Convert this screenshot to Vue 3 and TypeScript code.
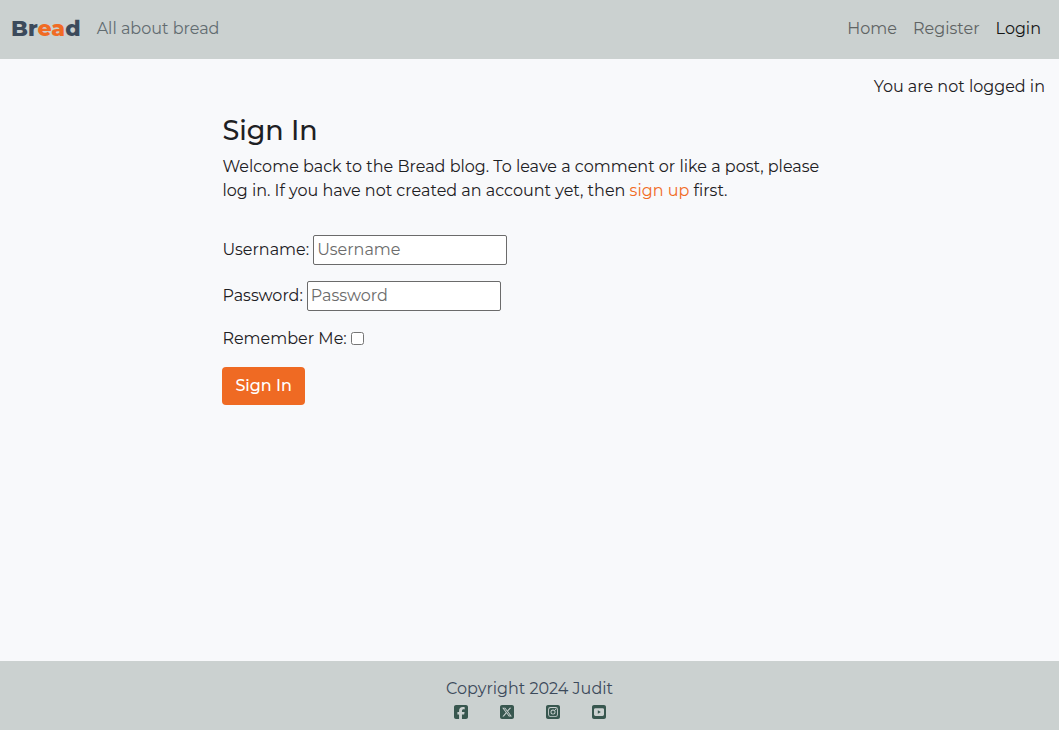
<script setup lang="ts">
import { ref } from 'vue'

const username = ref('')
const password = ref('')
const remember = ref(false)

const links = [
  { label: 'Home', active: false },
  { label: 'Register', active: false },
  { label: 'Login', active: true },
]

const tile = 'M64 32C28.7 32 0 60.7 0 96V416c0 35.3 28.7 64 64 64H384c35.3 0 64-28.7 64-64V96c0-35.3-28.7-64-64-64H64z'
const socials = [
  {
    name: 'Facebook',
    d: 'M64 32C28.7 32 0 60.7 0 96V416c0 35.3 28.7 64 64 64h98.2V334.2H109.4V256h52.8V222.3c0-87.1 39.4-127.5 125-127.5c16.2 0 44.2 3.2 55.7 6.4V172c-6-.6-16.5-1-29.6-1c-42 0-58.2 15.9-58.2 57.2V256h83.6l-14.4 78.2H255V480H384c35.3 0 64-28.7 64-64V96c0-35.3-28.7-64-64-64H64z',
  },
  {
    name: 'X',
    d: tile + 'm297.1 84L257.3 234.6 379.4 396H283.8L209 298.1 123.3 396H75.8l111-126.9L69.7 116h98l67.7 89.5L313.6 116h47.5zM323.3 367.6L153.4 142.9H125.1L296.9 367.6h26.3z',
  },
  {
    name: 'Instagram',
    d: tile + 'M146 96H302A78 78 0 0 1 380 174V338A78 78 0 0 1 302 416H146A78 78 0 0 1 68 338V174A78 78 0 0 1 146 96zM148 124A52 52 0 0 0 96 176V336A52 52 0 0 0 148 388H300A52 52 0 0 0 352 336V176A52 52 0 0 0 300 124zM224 176a80 80 0 1 1 0 160a80 80 0 1 1 0-160zM224 204a52 52 0 1 0 0 104a52 52 0 1 0 0-104zM307 154a19 19 0 1 1 0 38a19 19 0 1 1 0-38z',
  },
  {
    name: 'YouTube',
    d: tile + 'M110 132H338Q384 132 384 178V334Q384 380 338 380H110Q64 380 64 334V178Q64 132 110 132zM186 202V310L284 256z',
  },
]
</script>

<template>
  <div class="page">
    <header class="navbar">
      <a class="brand" href="#">Br<span class="accent">ea</span>d</a>
      <span class="tagline">All about bread</span>
      <nav class="links">
        <a v-for="l in links" :key="l.label" href="#" :class="{ active: l.active }">{{ l.label }}</a>
      </nav>
    </header>

    <p class="status">You are not logged in</p>

    <main class="content">
      <h1>Sign In</h1>
      <p class="intro">
        Welcome back to the Bread blog. To leave a comment or like a post, please log in. If you have not created
        an account yet, then <a class="accent" href="#">sign up</a> first.
      </p>
      <form @submit.prevent>
        <div class="field">
          <label for="username">Username:</label>
          <input id="username" v-model="username" class="text" type="text" placeholder="Username" />
        </div>
        <div class="field">
          <label for="password">Password:</label>
          <input id="password" v-model="password" class="text" type="password" placeholder="Password" />
        </div>
        <div class="field">
          <label for="remember">Remember Me:</label>
          <input id="remember" v-model="remember" class="check" type="checkbox" />
        </div>
        <button class="submit" type="submit">Sign In</button>
      </form>
    </main>

    <footer class="footer">
      <p>Copyright 2024 Judit</p>
      <div class="socials">
        <a v-for="s in socials" :key="s.name" href="#" :aria-label="s.name">
          <svg viewBox="0 0 448 512" width="14" height="16" aria-hidden="true">
            <path :d="s.d" fill="currentColor" fill-rule="evenodd" />
          </svg>
        </a>
      </div>
    </footer>
  </div>
</template>

<style>
body {
  margin: 0;
}
</style>

<style scoped>
.page {
  display: flex;
  flex-direction: column;
  min-height: 100vh;
  background: #f8f9fb;
  color: #1d2023;
  font-family: Montserrat, Inter, sans-serif;
  font-size: 16px;
  line-height: 24px;
}
p,
h1 {
  margin: 0;
}
a {
  text-decoration: none;
}
.accent {
  color: #f16b24;
}
.navbar {
  display: flex;
  align-items: center;
  padding: 11px 18px 12px 11px;
  background: #cbd1d0;
}
.brand {
  margin-right: 16px;
  color: #3c4a5b;
  font-size: 22px;
  font-weight: 800;
  line-height: 36px;
}
.tagline {
  color: #626c70;
}
.links {
  display: flex;
  gap: 16px;
  margin-left: auto;
}
.links a {
  color: #606464;
}
.links .active {
  color: #141515;
}
.status {
  padding: 16px 14px 0;
  text-align: right;
}
.content {
  box-sizing: border-box;
  flex: 1;
  width: 58%;
  margin: 0 auto;
  padding-top: 15px;
}
h1 {
  margin-bottom: 8px;
  font-size: 27px;
  font-weight: 500;
  line-height: 33px;
}
.intro {
  margin-bottom: 32px;
}
.field {
  display: flex;
  align-items: center;
  gap: 4px;
  margin-bottom: 16px;
}
.text {
  box-sizing: border-box;
  width: 194px;
  height: 30px;
  padding: 0 3px 2px;
  border: 1px solid #6b6b6b;
  border-radius: 2px;
  background: #fff;
  color: #212529;
  font: inherit;
}
.text::placeholder {
  color: #6c6c6c;
}
.check {
  width: 13px;
  height: 13px;
  margin: 0 0 2px;
}
.submit {
  padding: 7px 13px;
  border: 0;
  border-radius: 4px;
  background: #ef6a23;
  color: #fff;
  font: inherit;
  font-weight: 500;
}
.footer {
  padding: 16px 0 10px;
  background: #cbd1d0;
  color: #3c4a5b;
  text-align: center;
}
.socials {
  display: flex;
  justify-content: center;
  gap: 32px;
  padding-top: 3px;
}
.socials a {
  display: flex;
  color: #38574f;
}
</style>
